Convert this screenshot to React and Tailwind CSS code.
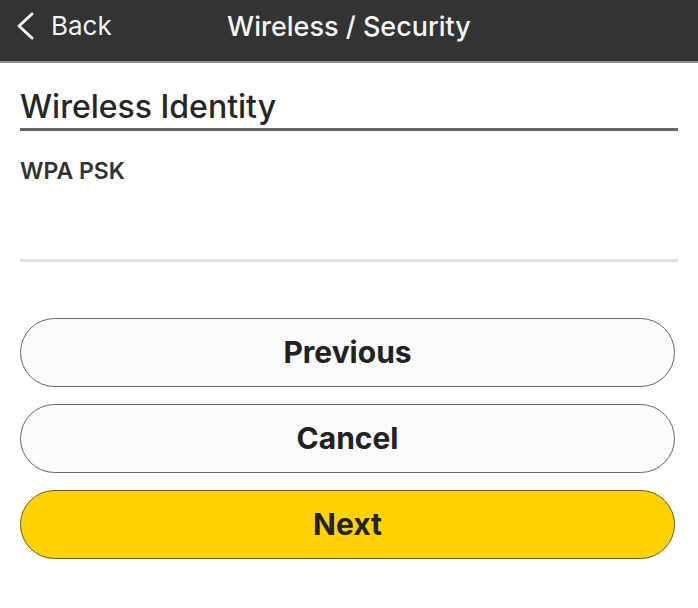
const BUTTONS = [
  { label: 'Previous', primary: false },
  { label: 'Cancel', primary: false },
  { label: 'Next', primary: true },
];

export default function App() {
  return (
    <div className="min-h-screen w-full bg-white font-['Inter',sans-serif] text-[#222]">
      {/* Top bar */}
      <div className="relative flex h-[63px] items-start border-b-2 border-[#8c8c8c] bg-[#333333] pt-[11px]">
        <div className="flex items-center pl-[14px] text-[#f2f2f2]">
          <svg width="22" height="30" viewBox="0 0 22 30" fill="none">
            <polyline
              points="18,3 5,15 18,27"
              stroke="currentColor"
              strokeWidth="3"
              strokeLinecap="round"
              strokeLinejoin="round"
            />
          </svg>
          <span className="ml-[15px] text-[26px] leading-[30px]">Back</span>
        </div>
        <div className="pointer-events-none absolute inset-x-0 top-[11px] flex h-[30px] items-center justify-center text-[27px] font-medium leading-none text-[#f4f4f4]">
          Wireless / Security
        </div>
      </div>

      {/* Section */}
      <div className="px-[20px]">
        <div className="mt-[25px] border-b-[3px] border-[#666] pb-[3px]">
          <h1 className="text-[32px] font-[550] leading-[37px] text-[#262626]">Wireless Identity</h1>
        </div>
        <p className="mt-[28px] text-[23px] font-semibold leading-[24px] text-[#333]">WPA PSK</p>
        <div className="mt-[76px] h-[3px] bg-[#e0e0e0]" />

        <div className="mt-[56px] flex flex-col gap-[17px] pr-[3px]">
          {BUTTONS.map((b) => (
            <button
              key={b.label}
              className={
                b.primary
                  ? 'flex h-[69px] items-center justify-center rounded-full border-[1.5px] border-[#6b5a1a] bg-[#ffd200] text-[30px] font-bold text-[#222]'
                  : 'flex h-[69px] items-center justify-center rounded-full border-[1.5px] border-[#666] bg-[#fbfbfb] text-[30px] font-bold text-[#222]'
              }
            >
              {b.label}
            </button>
          ))}
        </div>
      </div>
    </div>
  );
}
